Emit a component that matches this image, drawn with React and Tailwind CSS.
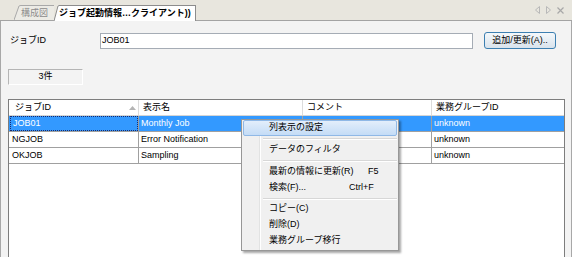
import React from "react";

const rows = [
    { id: "JOB01", name: "Monthly Job", comment: "", group: "unknown" },
    { id: "NGJOB", name: "Error Notification", comment: "", group: "unknown" },
    { id: "OKJOB", name: "Sampling", comment: "", group: "unknown" },
];

function MenuItem({ label, shortcut, labelWidth, active }) {
    return (
        <div
            className={`h-[16px] flex items-center mx-[1px] pl-[25px] rounded-[2px] ${active ? "bg-gradient-to-b from-[#e3eefb] to-[#c4dcf6] border border-[#8fb8e6]" : "border border-transparent"}`}
        >
            <span className={labelWidth}>{label}</span>
            {shortcut && <span>{shortcut}</span>}
        </div>
    );
}

function Separator({ h }) {
    return (
        <div className={`${h} flex items-center pl-[21px] pr-[1px]`}>
            <div className="w-full border-t border-[#d7d7d7] border-b border-b-white"></div>
        </div>
    );
}

export default function App() {
    return (
        <div className="w-[572px] h-[257px] overflow-hidden bg-[#f3f3f3] text-[9px] text-black relative font-['Liberation_Sans','Noto_Sans_CJK_JP',sans-serif]">
            {/* tab bar */}
            <div className="flex h-[21px] items-end bg-[#e8e6de] border-b border-[#a3a3a3] pl-[14px] pr-[6px]">
                <div className="flex items-end h-[15px]">
                    <svg width="7" height="15" viewBox="0 0 7 15">
                        <path d="M0 15 L5 1 Q5.5 0.5 7 0.5 V15Z" fill="#ecebe5" />
                        <path d="M0 15 L5 1 Q5.5 0.5 7 0.5" stroke="#a9a9a9" fill="none" />
                    </svg>
                    <div className="h-[15px] bg-[#ecebe5] border-t border-[#a9a9a9] text-[#8c8c8c] leading-[14px] pr-[6px]">構成図</div>
                </div>
                <div className="flex items-end h-[15px] -mb-px relative">
                    <svg width="6" height="16" viewBox="0 0 6 16" className="-mr-px">
                        <path d="M0 16 L4 1 Q4.5 0.5 6 0.5 V16Z" fill="#ffffff" />
                        <path d="M0 16 L4 1 Q4.5 0.5 6 0.5" stroke="#8c8c8c" fill="none" />
                    </svg>
                    <div className="h-[16px] bg-white border-t border-r border-[#8c8c8c] font-bold leading-[15px] pr-[4px]">ジョブ起動情報…クライアント))</div>
                </div>
                <div className="flex-1"></div>
                <div className="flex items-center gap-[6px] h-[20px] pr-[2px] text-[#b4b4b4]">
                    <svg width="5" height="8" viewBox="0 0 5 8"><path d="M4.5 0.5 L0.5 4 L4.5 7.5Z" fill="none" stroke="#b8b8b8" /></svg>
                    <svg width="5" height="8" viewBox="0 0 5 8"><path d="M0.5 0.5 L4.5 4 L0.5 7.5Z" fill="none" stroke="#b8b8b8" /></svg>
                    <svg width="7" height="7" viewBox="0 0 7 7"><path d="M0.5 0.5 L6.5 6.5 M6.5 0.5 L0.5 6.5" stroke="#a8a8a8" strokeWidth="1.2" /></svg>
                </div>
            </div>

            {/* body */}
            <div className="h-[236px] border-l border-r border-[#a8a8a8] bg-[#f3f3f3] pt-[11px]">
                <div className="flex items-center h-[17px] pl-[9px]">
                    <span className="w-[90px]">ジョブID</span>
                    <div className="w-[373px] h-[16px] bg-white border border-[#a5acb5] flex items-center pl-[1px]">JOB01</div>
                    <button className="ml-[11px] w-[72px] h-[17px] rounded-[3px] border border-[#3c7fb1] bg-gradient-to-b from-[#f4f8fb] to-[#d9e3ec] text-[9px] leading-[15px] text-center">
                        追加/更新(A)..
                    </button>
                </div>

                <div className="ml-[7px] mt-[20px] w-[75px] h-[16px] border border-[#b5b5b5] border-r-white border-b-white flex items-center justify-center">
                    3件
                </div>

                {/* table */}
                <div className="ml-[7px] mt-[14px] w-[557px] h-[170px] bg-white border border-[#7d7d7d]">
                    <div className="flex h-[16px] border-b border-[#d5d5d5] bg-white">
                        <div className="w-[130px] border-r border-[#dcdcdc] flex items-center pl-[6px] pr-[2px]">
                            <span className="flex-1">ジョブID</span>
                            <svg width="7" height="4" viewBox="0 0 7 4"><path d="M0 4 L3.5 0 L7 4Z" fill="#b4b4b4" /></svg>
                        </div>
                        <div className="w-[164px] border-r border-[#dcdcdc] flex items-center pl-[4px]">表示名</div>
                        <div className="w-[129px] border-r border-[#dcdcdc] flex items-center pl-[4px]">コメント</div>
                        <div className="flex-1 flex items-center pl-[4px]">業務グループID</div>
                    </div>
                    {rows.map((r, i) => (
                        <div
                            key={r.id}
                            className={`flex h-[16px] border-b border-[#a0a0a0] ${i === 0 ? "bg-[#3399ff] text-white" : ""}`}
                        >
                            <div className="w-[130px] border-r border-[#a0a0a0] flex items-center pl-[1px]">
                                <div className={`w-full h-full flex items-center pl-[2px] ${i === 0 ? "border border-dotted border-[#1a2a6a]" : ""}`}>
                                    {r.id}
                                </div>
                            </div>
                            <div className="w-[164px] border-r border-[#a0a0a0] flex items-center pl-[2px]">{r.name}</div>
                            <div className="w-[129px] border-r border-[#a0a0a0] flex items-center pl-[2px]">{r.comment}</div>
                            <div className="flex-1 flex items-center pl-[2px]">{r.group}</div>
                        </div>
                    ))}
                </div>
            </div>

            {/* context menu */}
            <div className="absolute left-[241px] top-[119px] w-[158px] bg-[#f0f0f0] border border-[#979797] shadow-[2px_2px_2px_rgba(0,0,0,0.35)]">
                <div className="absolute left-[17px] top-0 bottom-0 border-l border-[#e2e3e3] border-r border-r-white"></div>
                <div className="relative">
                    <MenuItem label="列表示の設定" active />
                    <Separator h="h-[6px]" />
                    <MenuItem label="データのフィルタ" />
                    <Separator h="h-[6px]" />
                    <MenuItem label="最新の情報に更新(R)" shortcut="F5" labelWidth="w-[99px]" />
                    <MenuItem label="検索(F)..." shortcut="Ctrl+F" labelWidth="w-[80px]" />
                    <Separator h="h-[5px]" />
                    <MenuItem label="コピー(C)" />
                    <MenuItem label="削除(D)" />
                    <MenuItem label="業務グループ移行" />
                    <div className="h-[1px]"></div>
                </div>
            </div>
        </div>
    );
}
